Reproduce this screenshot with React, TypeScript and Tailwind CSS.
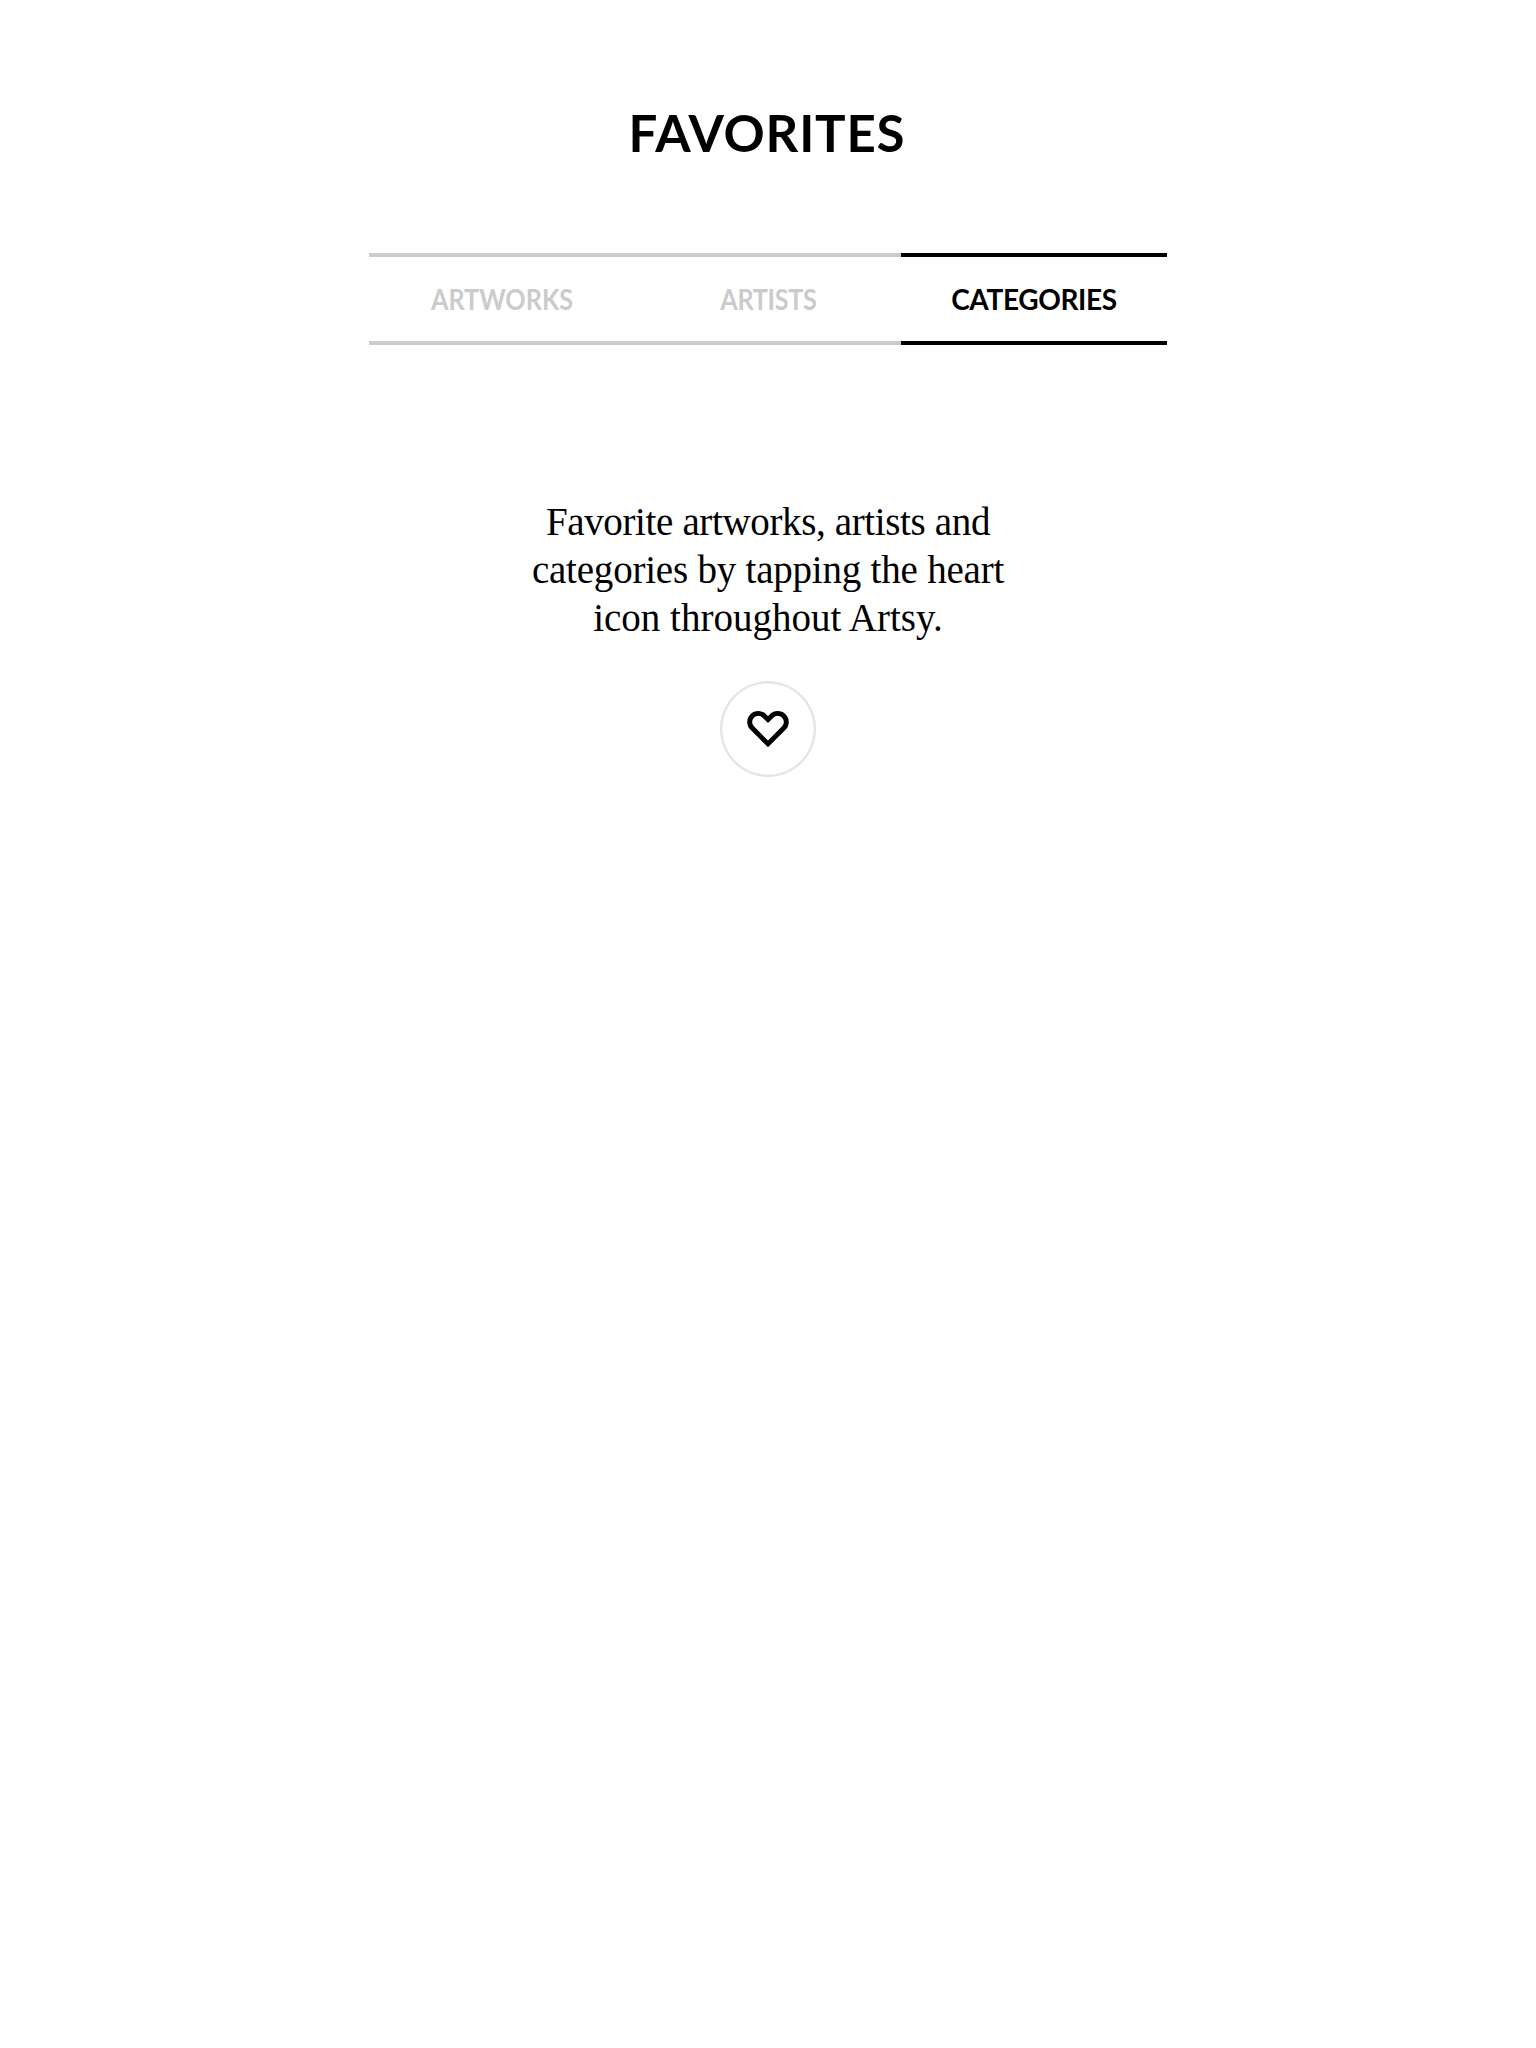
const tabs = [
  { label: 'ARTWORKS', className: 'border-[#cbcbcb] text-[#cbcbcb]', text: 'scale-x-90' },
  { label: 'ARTISTS', className: 'border-[#cbcbcb] text-[#cbcbcb]', text: 'scale-x-90 tracking-[-0.4px]' },
  { label: 'CATEGORIES', className: 'border-black text-black', text: 'tracking-[-0.35px]' },
];

function HeartIcon() {
  return (
    <svg viewBox="0 0 44 40" className="h-10 w-11" fill="none" stroke="#000" strokeWidth="4.9" strokeLinejoin="miter">
      <path d="M22 10.5 L18.4 6.9 A8.6 8.6 0 0 0 6.2 19.1 L22 34.9 L37.8 19.1 A8.6 8.6 0 0 0 25.6 6.9 Z" />
    </svg>
  );
}

export default function App() {
  return (
    <main className="flex min-h-[2048px] w-full flex-col items-center bg-white text-black">
      <h1 className="mt-[101px] mr-0.5 h-16 whitespace-nowrap font-['Lato',sans-serif] text-[51px] leading-[64px] font-bold tracking-[0.8px]">
        FAVORITES
      </h1>
      <nav className="mt-[88px] grid h-[92px] w-[798px] grid-cols-3 font-['Lato',sans-serif] text-[28px] font-bold">
        {tabs.map((tab) => (
          <a key={tab.label} className={`flex items-center justify-center border-y-4 pb-px ${tab.className}`}>
            <span className={tab.text}>{tab.label}</span>
          </a>
        ))}
      </nav>
      <p className="mt-[153px] flex flex-col items-center whitespace-nowrap font-['Liberation_Serif',serif] text-[39px] leading-[48px]">
        <span className="tracking-[-0.36px]">Favorite artworks, artists and</span>
        <span className="tracking-[-0.21px]">categories by tapping the heart</span>
        <span>icon throughout Artsy.</span>
      </p>
      <button
        aria-label="Favorite"
        className="mt-[39px] flex size-24 items-center justify-center rounded-full bg-white shadow-[inset_0_0_0_2.4px_#e5e5e5]"
      >
        <HeartIcon />
      </button>
    </main>
  );
}
